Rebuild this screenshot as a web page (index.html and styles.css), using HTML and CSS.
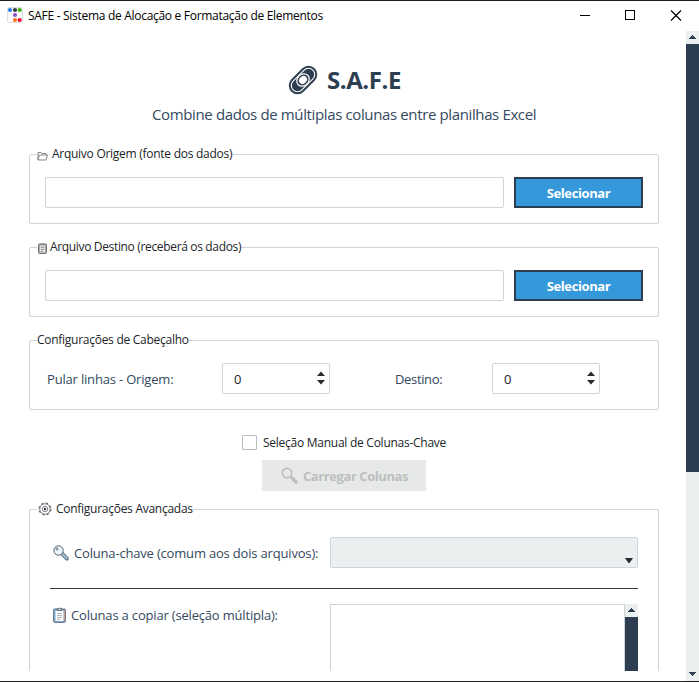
FILE: index.html
```
<!DOCTYPE html>
<html lang="pt-BR">
<head>
<meta charset="utf-8">
<title>SAFE - Sistema de Alocação e Formatação de Elementos</title>
<link rel="stylesheet" href="styles.css">
</head>
<body>
<div class="window">
  <header class="titlebar">
    <svg class="app-icon" width="16" height="16" viewBox="0 0 16 16"><rect x=".5" y=".5" width="15" height="15" rx="1" fill="#fafafa" stroke="#dedede"/><circle cx="3" cy="3" r="2.100" fill="#2380e8"/><circle cx="8" cy="3" r="2.100" fill="#343a46"/><circle cx="12.700" cy="3" r="2.100" fill="#38b312"/><circle cx="8" cy="8" r="2.100" fill="#9255c8"/><circle cx="8" cy="13" r="2.100" fill="#ff7a1c"/><circle cx="12.700" cy="13" r="2.100" fill="#ff0838"/></svg>
    <span class="app-title">SAFE - Sistema de Alocação e Formatação de Elementos</span>
    <svg class="controls" width="102" height="12" viewBox="0 0 102 12" fill="none" stroke="#000"><path d="M0 5.500h10M45.500 .5h9v9h-9z" shape-rendering="crispEdges"/><path d="M91 .5l10 10M101 .5l-10 10" stroke-width="1.200"/></svg>
  </header>
  <div class="body">
    <main class="page">
      <h1 class="brand">
        <svg width="30" height="30" viewBox="0 0 30 30" fill="none"><g transform="rotate(-45 15 15)"><rect x="-1.500" y="6.300" width="33" height="17.400" rx="8.700" fill="#2c3e50"/><rect x="1" y="8.800" width="28" height="12.400" rx="6.200" stroke="#fff" stroke-width="1.100"/><ellipse cx="15" cy="15" rx="6.700" ry="5.700" fill="#2c3e50" stroke="#fff" stroke-width="1.200"/><ellipse cx="15" cy="15" rx="4.300" ry="3.600" fill="#fff"/></g></svg>
        <span class="brand-name">S.A.F.E</span>
      </h1>
      <p class="subtitle"><span>Combine dados de múltiplas colunas entre planilhas Excel</span></p>

      <section class="group">
        <h2 class="legend"><svg class="i-folder" width="11" height="10" viewBox="0 0 11 10" fill="#fff" stroke="#777" stroke-width=".9"><path d="M1 9V1.500h3l.8 1H9V4M1 9L2.500 4h8L9 9z"/></svg><span class="t-origem">Arquivo Origem (fonte dos dados)</span></h2>
        <div class="row"><div class="field"></div><button class="btn">Selecionar</button></div>
      </section>
      <section class="group">
        <h2 class="legend"><svg class="i-clip-sm" width="9" height="11" viewBox="0 0 9 11"><rect x=".5" y="1" width="8" height="9.500" rx="1" fill="#aaa" stroke="#776c70"/><path d="M2 2.500h5v7H2z" fill="#ddd"/><path d="M2.500 1h4M3 4.500h3M3 6.500h3M3 8.500h2" stroke="#888" stroke-width=".8"/></svg><span class="t-destino">Arquivo Destino (receberá os dados)</span></h2>
        <div class="row"><div class="field"></div><button class="btn">Selecionar</button></div>
      </section>
      <section class="group">
        <h2 class="legend"><span class="t-cab">Configurações de Cabeçalho</span></h2>
        <div class="row spins">
          <span class="label l-pular">Pular linhas - Origem:</span>
          <div class="spin"><span>0</span><svg width="10" height="14" viewBox="0 0 10 14" fill="#272b30"><path d="M1 5L5 .5 9 5zM1 9l4 4.500L9 9z"/></svg></div>
          <span class="label l-dest">Destino:</span>
          <div class="spin"><span>0</span><svg width="10" height="14" viewBox="0 0 10 14" fill="#272b30"><path d="M1 5L5 .5 9 5zM1 9l4 4.500L9 9z"/></svg></div>
        </div>
      </section>

      <div class="check"><i class="box"></i><span class="t-check">Seleção Manual de Colunas-Chave</span></div>
      <button class="load"><svg width="17" height="17" viewBox="0 0 17 17" fill="none" stroke="#bdbfbf"><circle cx="6" cy="6" r="4.700" stroke-width="1.700"/><path d="M9.500 9.500l1.500 1.500" stroke-width="1.500"/><path d="M11 11l4 4" stroke-width="3.300" stroke-linecap="round"/></svg><span>Carregar Colunas</span></button>

      <section class="group advanced">
        <h2 class="legend"><svg class="i-gear" width="14" height="14" viewBox="0 0 14 14" fill="none" stroke="#4a4f55"><circle cx="7" cy="7" r="6" stroke-width="1" stroke-dasharray="2.500 2.210"/><circle cx="7" cy="7" r="5.200" stroke-width=".7"/><circle cx="7" cy="7" r="2.700" stroke-width=".7"/><circle cx="7" cy="7" r="1.200" fill="#33383d" stroke="none"/></svg><span class="t-adv">Configurações Avançadas</span></h2>
        <div class="adv-row key-row">
          <span class="label"><svg class="i-key" width="16" height="16" viewBox="0 0 16 16" fill="none"><path d="M7.500 9l5.500 6h2v-2.500L9.500 7" fill="#9dbdd4" stroke="#4d6274"/><circle cx="5.500" cy="5.500" r="4.700" fill="#eef5fa" stroke="#4d6274"/><circle cx="4" cy="4" r="1.100" stroke="#4d6274" stroke-width=".8"/></svg><span class="t-key">Coluna-chave (comum aos dois arquivos):</span></span>
          <div class="combo"><svg width="8" height="5" viewBox="0 0 8 5"><path d="M0 0h8L4.500 5h-1z" fill="#272b30"/></svg></div>
        </div>
        <hr class="sep">
        <div class="adv-row list-row">
          <span class="label"><svg class="i-clip" width="13" height="16" viewBox="0 0 13 16"><rect x=".7" y="2" width="11.600" height="13.300" rx="1" fill="#7eb1d8" stroke="#56697c"/><path d="M2.500 3.500h8v10.500h-8z" fill="#fff"/><path d="M11.300 3v11" stroke="#d99a78"/><path d="M4 3.500V2h1.500a1 1 0 0 1 2 0H9v1.500z" fill="#ddd" stroke="#48525c" stroke-width=".8"/><path d="M4 6.500h5M4 8.500h5M4 10.500h5M4 12.500h3" stroke="#9aa3aa" stroke-width=".8"/></svg><span class="t-cols">Colunas a copiar (seleção múltipla):</span></span>
          <div class="list"></div>
          <div class="list-bar"><div class="arrow"><svg width="7" height="4" viewBox="0 0 7 4" fill="#2c3e50" shape-rendering="crispEdges"><path d="M3 0h1v1h1v1h1v1h1v1H0V3h1V2h1V1h1z"/></svg></div></div>
        </div>
      </section>
    </main>
    <aside class="scrollbar">
      <div class="arrow"><svg width="7" height="4" viewBox="0 0 7 4" fill="#2c3e50" shape-rendering="crispEdges"><path d="M3 0h1v1h1v1h1v1h1v1H0V3h1V2h1V1h1z"/></svg></div>
      <div class="thumb"></div>
      <div class="arrow down"><svg width="7" height="4" viewBox="0 0 7 4" fill="#2c3e50" shape-rendering="crispEdges"><path d="M0 0h7v1H6v1H5v1H4v1H3V3H2V2H1V1H0z"/></svg></div>
    </aside>
  </div>
</div>
</body>
</html>
```
FILE: styles.css
```
* { box-sizing: border-box; }
body { margin: 0; background: #fff; color: #212529; font-family: "Open Sans", "Noto Sans", sans-serif; font-size: 12px; }
h1, h2, p { margin: 0; font-weight: 400; }
svg { display: block; flex: none; overflow: visible; }
span { white-space: nowrap; }
button { font-family: inherit; padding: 0; border-radius: 0; }

.window { width: 699px; height: 682px; border-top: 1px solid #1f1d1f; border-bottom: 1px solid #1f1d1f; display: flex; flex-direction: column; overflow: hidden; }
.titlebar { height: 30px; flex: none; display: flex; align-items: center; padding: 0 17px 0 7px; color: #000; }
.app-icon { margin-top: -2px; }
.app-title { margin: -2px 0 0 5px; letter-spacing: -.295px; }
.controls { margin-left: auto; }

.body { flex: 1; min-height: 0; display: flex; }
.page { width: 686px; height: 640px; overflow: hidden; padding: 0 27px 0 29px; }

.brand { height: 30px; margin-top: 34px; padding-left: 259px; display: flex; align-items: center; gap: 9px; color: #2c3e50; font-size: 24px; font-weight: 700; line-height: 30px; }
.brand-name { letter-spacing: -.42px; }
.subtitle { height: 24px; margin-top: 8px; padding-left: 123px; line-height: 22px; font-size: 15px; color: #34495e; letter-spacing: -.37px; }

.group { width: 630px; height: 70px; margin-top: 23px; border: 1px solid #ced4da; border-radius: 2px; padding: 0 15px; }
.subtitle + .group { margin-top: 27px; }
.legend { display: flex; align-items: center; width: max-content; height: 18px; margin: -10px 0 0 -8px; background: #fff; font-size: 12px; line-height: 18px; letter-spacing: -.27px; }
.i-folder { margin: 3px 4px 0 0; }
.i-clip-sm { margin: 3px 3px 0 1px; }
.t-destino { letter-spacing: -.34px; }
.i-gear { margin: 0 4px 0 1px; }
.row { display: flex; margin-top: 14px; height: 31px; align-items: center; }
.field { width: 459px; height: 31px; border: 1px solid #ced4da; border-radius: 2px; }
.btn { width: 129px; height: 31px; margin-left: 10px; background: #3498db; border: 2px solid #2c3e50; color: #fff; font-size: 13px; font-weight: 700; letter-spacing: -.4px; }
.label { color: #34495e; font-size: 13px; letter-spacing: -.18px; }
.l-pular { width: 177px; padding-left: 2px; }
.l-dest { width: 162px; padding-left: 65px; letter-spacing: -.35px; }
.spin { width: 108px; height: 31px; border: 1px solid #ced4da; border-radius: 2px; display: flex; align-items: center; justify-content: space-between; padding: 0 3px 0 11px; font-size: 13px; }
.spin svg { margin-top: -2px; }

.check { display: flex; align-items: center; height: 16px; margin: 24px 0 0 213px; gap: 6px; }
.box { width: 15px; height: 15px; border: 1px solid #b9bdc0; border-radius: 1px; }
.t-check { letter-spacing: -.26px; }
.load { display: flex; align-items: center; width: 164px; height: 31px; margin: 10px 0 0 233px; padding-left: 19px; gap: 5px; border: 0; background: #e7e9e8; color: #bdbfbf; font-size: 13px; font-weight: 700; letter-spacing: -.42px; }

.advanced { height: 300px; margin-top: 18px; padding: 0 20px; }
.advanced .legend { margin-left: -13px; }
.adv-row { display: flex; }
.adv-row .label { display: flex; align-items: center; width: 280px; height: 31px; padding-left: 3px; }
.key-row { margin-top: 19px; }
.i-key { margin-right: 5px; }
.i-clip { margin-right: 5px; }
.combo { width: 308px; height: 31px; border: 1px solid #ced4da; border-radius: 2px; background: #ebefef; display: flex; align-items: flex-end; justify-content: flex-end; padding: 0 4px 4px 0; }
.sep { border: 0; height: 1px; margin: 20px 0 15px; background: #343e49; }
.list-row .label { height: 22px; }
.list { width: 295px; height: 160px; border: 1px solid #ced4da; }
.list-bar { width: 13px; height: 160px; background: #2c3e50; }
.arrow { width: 13px; height: 13px; background: #ebefef; display: flex; align-items: center; justify-content: center; }
.arrow svg { margin-top: -1px; }
.scrollbar { width: 13px; background: #ebefef; display: flex; flex-direction: column; }
.thumb { height: 428px; background: #2c3e50; }
.down { margin-top: auto; }
```
